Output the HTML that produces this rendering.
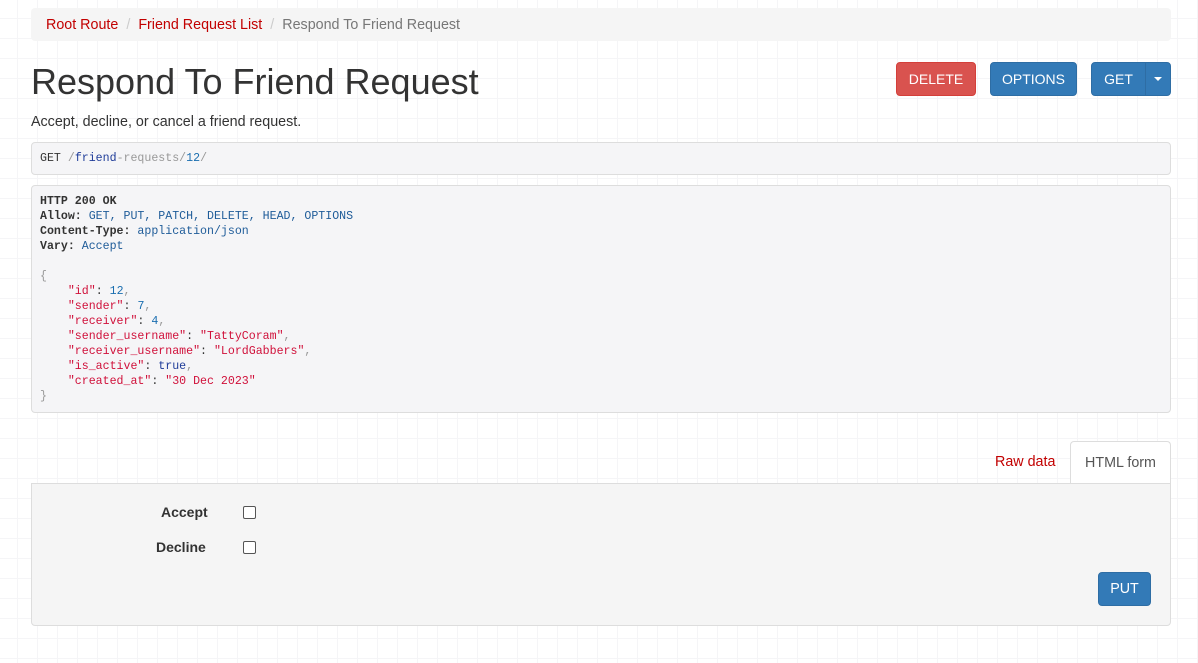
<!DOCTYPE html>
<html><head><meta charset="utf-8"><style>
body{margin:0;width:1198px;height:663px;overflow:hidden;font-family:"Liberation Sans",sans-serif;font-size:14.3px;color:#333;
background-color:#fff;background-image:linear-gradient(#f5f5f7 1px,transparent 1px),linear-gradient(90deg,#f5f5f7 1px,transparent 1px);background-size:20px 20px;background-position:-3px -2px}
.c{position:absolute;left:31px;width:1140px}
.bc{top:8px;height:33px;background:#f5f5f5;border-radius:4px;line-height:34px;padding-left:15px;box-sizing:border-box;font-size:14.3px}
.bc a{color:#c20000;text-decoration:none}.bc .s{color:#ccc;padding:0 8px}.bc .act{color:#777}
h1{position:absolute;left:31px;top:62px;margin:0;font-size:36px;font-weight:400;line-height:40px}
.btn{position:absolute;top:62px;height:34px;border-radius:4px;color:#fff;font-size:14px;line-height:32px;text-align:center;box-sizing:border-box}
.desc{position:absolute;left:31px;top:114px}
pre{margin:0;font-family:"Liberation Mono",monospace;font-size:11.6px;line-height:15px;background:#f5f5f7;border:1px solid #ddd;border-radius:4px;padding:0 8px;box-sizing:border-box;color:#333}
b{font-weight:bold}.bl{color:#1f5c99}.k{color:#d0103a}.n{color:#1a6eb0}.g{color:#999}.str{color:#d0103a}
.panel{top:483px;height:143px;background:#f5f5f5;border:1px solid #ddd;border-radius:0 0 4px 4px;box-sizing:border-box}
.lab{position:absolute;font-weight:bold;font-size:14px}
.cb{position:absolute;width:11px;height:11px;border:1px solid #555;border-radius:2px;background:#fff}
</style></head><body>
<div class="c bc"><a>Root Route</a><span class="s">/</span><a>Friend Request List</a><span class="s">/</span><span class="act">Respond To Friend Request</span></div>
<h1>Respond To Friend Request</h1>
<div class="btn" style="left:896px;width:80px;background:#d9534f;border:1px solid #d43f3a">DELETE</div>
<div class="btn" style="left:990px;width:87px;background:#337ab7;border:1px solid #2e6da4">OPTIONS</div>
<div class="btn" style="left:1091px;width:55px;background:#337ab7;border:1px solid #2e6da4;border-radius:4px 0 0 4px">GET</div>
<div class="btn" style="left:1145px;width:26px;background:#337ab7;border:1px solid #2e6da4;border-radius:0 4px 4px 0"><span style="display:inline-block;border-top:4px solid #fff;border-left:4px solid transparent;border-right:4px solid transparent;vertical-align:middle;margin-top:-3px"></span></div>
<div class="desc">Accept, decline, or cancel a friend request.</div>
<pre class="c" style="top:142px;height:33px;line-height:31px">GET <span class="g">/</span><span style="color:#1f3c99">friend</span><span class="g">-requests/</span><span class="n">12</span><span class="g">/</span></pre>
<pre class="c" style="top:185px;height:228px;padding-top:8px"><b>HTTP 200 OK</b>
<b>Allow:</b> <span class="bl">GET, PUT, PATCH, DELETE, HEAD, OPTIONS</span>
<b>Content-Type:</b> <span class="bl">application/json</span>
<b>Vary:</b> <span class="bl">Accept</span>

<span class="g">{</span>
    <span class="k">"id"</span>: <span class="n">12</span><span class="g">,</span>
    <span class="k">"sender"</span>: <span class="n">7</span><span class="g">,</span>
    <span class="k">"receiver"</span>: <span class="n">4</span><span class="g">,</span>
    <span class="k">"sender_username"</span>: <span class="str">"TattyCoram"</span><span class="g">,</span>
    <span class="k">"receiver_username"</span>: <span class="str">"LordGabbers"</span><span class="g">,</span>
    <span class="k">"is_active"</span>: <span style="color:#1f3c99">true</span><span class="g">,</span>
    <span class="k">"created_at"</span>: <span class="str">"30 Dec 2023"</span>
<span class="g">}</span></pre>
<div style="position:absolute;left:995px;top:454px;color:#c20000">Raw data</div>
<div style="position:absolute;left:1070px;top:441px;width:101px;height:43px;background:#fff;border:1px solid #ddd;border-bottom:none;border-radius:4px 4px 0 0;box-sizing:border-box;text-align:center;line-height:42px;color:#555">HTML form</div>
<div class="c panel">
<div class="lab" style="left:129px;top:20px">Accept</div><div class="cb" style="left:211px;top:22px"></div>
<div class="lab" style="left:124px;top:55px">Decline</div><div class="cb" style="left:211px;top:57px"></div>
<div style="position:absolute;left:1066px;top:88px;width:53px;height:34px;background:#337ab7;border:1px solid #2e6da4;border-radius:4px;box-sizing:border-box;color:#fff;text-align:center;line-height:32px">PUT</div>
</div>
</body></html>
